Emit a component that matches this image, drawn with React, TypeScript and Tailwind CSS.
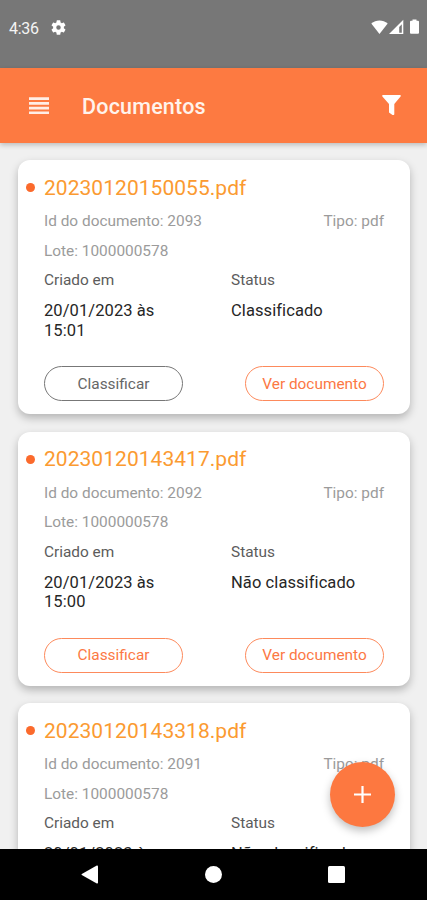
import React from 'react';
import clsx from 'clsx';

interface Documento {
    id: number;
    nome: string;
    lote: string;
    tipo: string;
    criadoEm: string;
    status: string;
    classificado: boolean;
}

const documentos: Documento[] = [
    {
        id: 2093,
        nome: '20230120150055.pdf',
        lote: '1000000578',
        tipo: 'pdf',
        criadoEm: '20/01/2023 às 15:01',
        status: 'Classificado',
        classificado: true
    },
    {
        id: 2092,
        nome: '20230120143417.pdf',
        lote: '1000000578',
        tipo: 'pdf',
        criadoEm: '20/01/2023 às 15:00',
        status: 'Não classificado',
        classificado: false
    },
    {
        id: 2091,
        nome: '20230120143318.pdf',
        lote: '1000000578',
        tipo: 'pdf',
        criadoEm: '20/01/2023 às 14:33',
        status: 'Não classificado',
        classificado: false
    }
];

const StatusBar: React.FC = () => (
    <div className="flex h-[68px] shrink-0 items-start justify-between bg-[#777777] pt-[18px] pr-[7px] pl-[9px] text-[#f4f4f4]">
        <div className="flex h-5 items-center gap-[12px]">
            <span className="w-[30px] pt-px text-[16px] leading-5 tracking-[-0.3px]">4:36</span>
            <svg viewBox="2 2 20 20" className="mb-[2px] h-[15px] w-[15px]" fill="white">
                <path d="M19.14 12.94c.04-.3.06-.61.06-.94 0-.32-.02-.64-.07-.94l2.03-1.58a.49.49 0 0 0 .12-.61l-1.92-3.32a.49.49 0 0 0-.59-.22l-2.39.96a7 7 0 0 0-1.62-.94l-.36-2.54a.48.48 0 0 0-.48-.41h-3.84a.47.47 0 0 0-.47.41l-.36 2.54c-.59.24-1.13.57-1.62.94l-2.39-.96a.48.48 0 0 0-.59.22L2.74 8.87a.47.47 0 0 0 .12.61l2.03 1.58a6 6 0 0 0-.02 1.88l-2.03 1.58a.49.49 0 0 0-.12.61l1.92 3.32c.12.22.37.29.59.22l2.39-.96c.5.38 1.03.7 1.62.94l.36 2.54c.05.24.24.41.48.41h3.84c.24 0 .44-.17.47-.41l.36-2.54a7 7 0 0 0 1.62-.94l2.39.96c.22.08.47 0 .59-.22l1.92-3.32a.47.47 0 0 0-.12-.61zM12 15a3 3 0 1 1 0-6 3 3 0 0 1 0 6z" />
            </svg>
        </div>
        <div className="flex items-center pt-[1px] text-white">
            <svg viewBox="0 0 17 15" className="h-[15px] w-[17px]" fill="currentColor">
                <path d="M0.3 4.6C5 .3 12 .3 16.7 4.6L8.5 15z" />
            </svg>
            <svg viewBox="0 0 15 15" className="ml-px h-[15px] w-[15px]" fill="currentColor">
                <path fillRule="evenodd" d="M14.3 .8V15H0zM12.8 5.3l-2.6 2.7v5.7h2.6z" />
            </svg>
            <svg viewBox="0 0 9 15" className="mr-[1px] ml-[6px] h-[15px] w-[9px]" fill="currentColor">
                <path d="M2.5 .4h4v1.4H8a1 1 0 0 1 1 1v11a1 1 0 0 1-1 1H1a1 1 0 0 1-1-1v-11a1 1 0 0 1 1-1h1.5z" />
            </svg>
        </div>
    </div>
);

const AppBar: React.FC = () => (
    <header className="relative z-10 flex h-[75px] shrink-0 items-center bg-[#fd7a41] pr-[26px] pl-[29px] text-white shadow-[0_2px_5px_rgba(0,0,0,0.22)]">
        <button aria-label="Menu">
            <svg viewBox="0 0 20 18" className="h-[18px] w-[20px]" fill="#ffeee6">
                <path d="M0 .3h20v2.7H0zM0 5h20v2.7H0zM0 9.7h20v2.7H0zM0 14.4h20v2.7H0z" />
            </svg>
        </button>
        <h1 className="ml-[33px] flex-1 pt-[3px] text-[21.5px] font-medium tracking-[0.2px] text-[#fff3ec]">Documentos</h1>
        <button aria-label="Filtrar">
            <svg viewBox="0 0 19 20" className="mb-[2px] h-5 w-[19px]" fill="currentColor">
                <path d="M1 0h17c.8 0 1.1.8.6 1.4L12.3 9v10c0 .6-.4 1-1 1h-.8L7 17.4V9L.4 1.4C-.1.8.2 0 1 0z" />
            </svg>
        </button>
    </header>
);

const DocumentoCard: React.FC<{ documento: Documento }> = ({ documento }) => (
    <article className="h-[254px] shrink-0 rounded-[12px] bg-white px-[26px] pt-[12px] shadow-[0_4px_9px_rgba(0,0,0,0.25)]">
        <div className="-ml-[18px] flex h-[31px] items-center">
            <span className="mr-[9px] h-[9px] w-[9px] rounded-full bg-[#fb6a2c]" />
            <h2 className="pt-[2px] text-[21px] tracking-[0.04px] text-[#fb9a31]">{documento.nome}</h2>
        </div>

        <div className="mt-[3px] flex h-[30px] items-center justify-between pt-[1.5px] text-[#9b9b9b]">
            <span>Id do documento: {documento.id}</span>
            <span>Tipo: {documento.tipo}</span>
        </div>
        <div className="flex h-[29px] items-center pt-[1.5px] text-[#9b9b9b]">Lote: {documento.lote}</div>

        <div className="grid grid-cols-[187px_1fr] text-[#5c5c5c]">
            <span className="leading-[30px]">Criado em</span>
            <span className="leading-[30px]">Status</span>
        </div>
        <div className="mt-[6px] grid grid-cols-[187px_1fr] text-[16.5px] leading-[19.5px] tracking-[0.08px] text-[#262626]">
            <span className="w-[125px]">{documento.criadoEm}</span>
            <span>{documento.status}</span>
        </div>

        <div className="mt-[26px] flex justify-between">
            <button
                className={clsx(
                    'h-[35px] w-[139px] rounded-full border pt-[2px]',
                    documento.classificado ? 'border-[#777777] text-[#666666]' : 'border-[#fd8a5c] text-[#fc7844]'
                )}
            >
                Classificar
            </button>
            <button className="h-[35px] w-[139px] rounded-full border border-[#fd8a5c] pt-[2px] text-[#fc7844]">
                Ver documento
            </button>
        </div>
    </article>
);

const NavigationBar: React.FC = () => (
    <nav className="relative z-20 flex h-[51px] shrink-0 items-center justify-between bg-black pr-[82px] pl-[81px]">
        <svg viewBox="0 0 17 19" className="h-[19px] w-[17px]" fill="white">
            <path d="M15.8.6c.6-.3 1.2 0 1.2.7v16.4c0 .7-.6 1-1.2.7L.8 10c-.5-.3-.5-.7 0-1z" />
        </svg>
        <span className="h-[17px] w-[17px] rounded-full bg-white" />
        <span className="h-[17px] w-[17px] rounded-[1.5px] bg-white" />
    </nav>
);

const App: React.FC = () => {
    return (
        <div className="flex h-[900px] w-[427px] flex-col overflow-hidden bg-[#f0f0f0] font-['Roboto',sans-serif] text-[15.4px]">
            <StatusBar />
            <AppBar />

            <main className="relative min-h-0 flex-1 overflow-hidden">
                <div className="flex flex-col gap-[17.5px] pt-[17px] pr-[17px] pl-[18px]">
                    {documentos.map((documento) => (
                        <DocumentoCard key={documento.id} documento={documento} />
                    ))}
                </div>

                {/* Floating action button */}
                <button
                    aria-label="Adicionar"
                    className="absolute right-[32px] bottom-[22.5px] flex h-[65px] w-[65px] items-center justify-center rounded-full bg-[#fd7840] shadow-[0_4px_8px_rgba(0,0,0,0.25)]"
                >
                    <svg viewBox="0 0 17 17" className="h-[17px] w-[17px]" fill="none" stroke="white" strokeWidth="2.2">
                        <path d="M8.5 0v17M0 8.5h17" />
                    </svg>
                </button>
            </main>

            <NavigationBar />
        </div>
    );
};

export default App;
